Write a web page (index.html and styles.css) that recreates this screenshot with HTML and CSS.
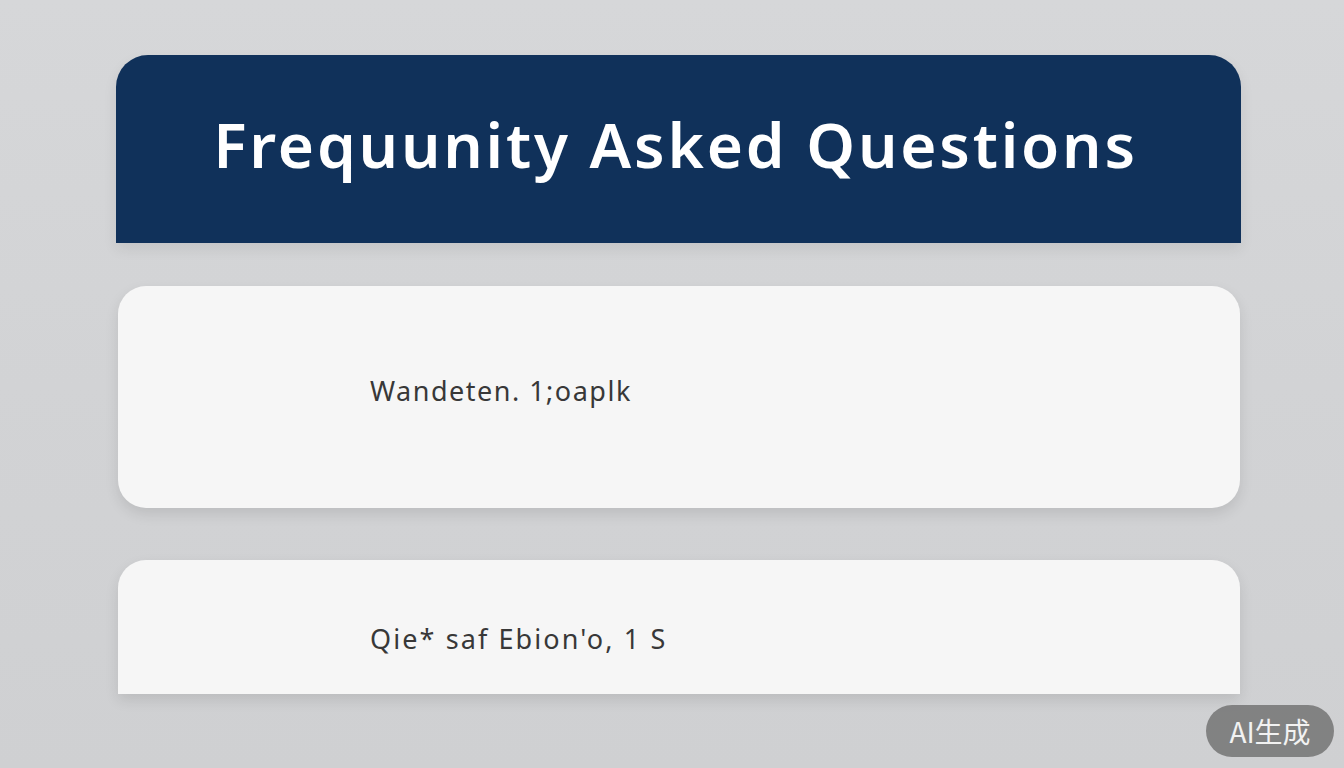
FILE: index.html
```html
<!DOCTYPE html>
<html lang="en">
<head>
<meta charset="utf-8">
<title>FAQ</title>
<link rel="stylesheet" href="styles.css">
</head>
<body>
<main class="page">
  <header class="faq-header">
    <h1 class="faq-title">Frequunity Asked Questions</h1>
  </header>
  <section class="faq-card faq-card--full">
    <p class="faq-question">Wandeten. 1;oaplk</p>
  </section>
  <section class="faq-card faq-card--cut">
    <p class="faq-question faq-question--wide">Qie* saf Ebion'o, 1 S</p>
  </section>
</main>
<div class="ai-badge">AI生成</div>
</body>
</html>
```
FILE: styles.css
```css
html, body {
  margin: 0;
  padding: 0;
}
body {
  width: 1344px;
  height: 768px;
  overflow: hidden;
  background: linear-gradient(180deg, #d6d7d9 0%, #d2d3d5 50%, #cfd0d2 100%);
  font-family: "Noto Sans", "Open Sans", sans-serif;
  position: relative;
}
.page {
  display: flex;
  flex-direction: column;
  align-items: flex-start;
  padding-top: 55px;
  padding-left: 116px;
}
.faq-header {
  width: 1125px;
  height: 188px;
  background: #10315a;
  border-radius: 32px 32px 0 0;
  display: flex;
  align-items: center;
  justify-content: center;
  box-shadow: 0 6px 14px rgba(0, 0, 0, 0.08);
}
.faq-title {
  margin: 0;
  margin-top: -10px;
  margin-left: -6px;
  color: #ffffff;
  font-family: "Noto Sans", sans-serif;
  font-weight: 600;
  font-size: 62px;
  letter-spacing: 2.8px;
}
.faq-card {
  width: 1122px;
  margin-left: 2px;
  background: #f6f6f6;
  display: flex;
  align-items: center;
  box-sizing: border-box;
  padding-left: 252px;
  box-shadow: 0 6px 14px rgba(0, 0, 0, 0.10);
}
.faq-card--full {
  margin-top: 43px;
  height: 222px;
  border-radius: 28px;
  padding-bottom: 14px;
}
.faq-card--cut {
  margin-top: 52px;
  height: 134px;
  border-radius: 28px 28px 0 0;
  padding-top: 22px;
}
.faq-question {
  margin: 0;
  color: #383838;
  font-family: "Noto Sans", sans-serif;
  font-weight: 400;
  font-size: 27px;
  letter-spacing: 1.5px;
}
.faq-question--wide {
  letter-spacing: 2.1px;
}
.ai-badge {
  position: absolute;
  left: 1206px;
  top: 705px;
  width: 128px;
  height: 52px;
  border-radius: 26px;
  background: rgba(118, 118, 118, 0.88);
  color: #f2f2f2;
  font-family: "Noto Sans CJK SC", sans-serif;
  font-size: 28px;
  display: flex;
  align-items: center;
  justify-content: center;
}
```
